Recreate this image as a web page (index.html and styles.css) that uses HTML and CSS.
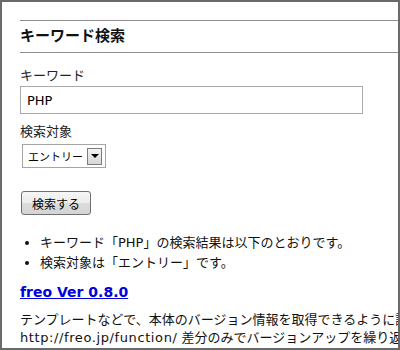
FILE: index.html
```html
<!DOCTYPE html>
<html lang="ja">
<head>
<meta charset="utf-8">
<title>キーワード検索</title>
<link rel="stylesheet" href="styles.css">
</head>
<body>
<div class="frame">
  <div class="content">
    <h2 class="title">キーワード検索</h2>
    <form class="search">
      <label class="label" for="word">キーワード</label>
      <input class="textbox" id="word" type="text" value="PHP">
      <label class="label label-target" for="target">検索対象</label>
      <div class="selectbox">
        <select class="select" id="target"><option>エントリー</option></select>
        <span class="arrow"><span class="tri"></span></span>
      </div>
      <button class="btn" type="button">検索する</button>
    </form>
    <ul class="result">
      <li>キーワード「PHP」の検索結果は以下のとおりです。</li>
      <li>検索対象は「エントリー」です。</li>
    </ul>
    <h3 class="entry"><a href="#">freo Ver 0.8.0</a></h3>
    <p class="text">テンプレートなどで、本体のバージョン情報を取得できるように調整しました。<br><span class="url">http://freo.jp/function/</span> 差分のみでバージョンアップを繰り返しています。</p>
  </div>
</div>
</body>
</html>
```
FILE: styles.css
```css
html, body {
  margin: 0;
  padding: 0;
  background: #fff;
}
body {
  font-family: "DejaVu Sans", "Noto Sans CJK JP", sans-serif;
  font-size: 13px;
  color: #111;
}
.frame {
  width: 400px;
  height: 350px;
  box-sizing: border-box;
  border: 2px solid #6a6a6a;
  overflow: hidden;
}
.content {
  padding: 18px 0 0 18px;
}
.title {
  margin: 0;
  padding: 7px 0;
  border-top: 1px solid #8e8e8e;
  border-bottom: 1px solid #8e8e8e;
  font-size: 15px;
  line-height: 17px;
  font-weight: bold;
  color: #111;
}
.search {
  display: flex;
  flex-direction: column;
  align-items: flex-start;
  margin: 0;
}
.label {
  display: block;
  margin-top: 14px;
  line-height: 18px;
  color: #222;
}
.label-target {
  margin-top: 9px;
}
.textbox {
  margin: 1px 0 0 0;
  width: 343px;
  height: 28px;
  box-sizing: border-box;
  border: 1px solid #a9a9b0;
  padding: 0 6px;
  font-family: "DejaVu Sans", "Noto Sans CJK JP", sans-serif;
  font-size: 13px;
  color: #000;
  outline: none;
}
.selectbox {
  display: flex;
  align-items: center;
  margin: 3px 0 0 2px;
  width: 84px;
  height: 24px;
  box-sizing: border-box;
  border: 1px solid #a5a5a5;
  padding: 0 3px 0 5px;
  background: #fff;
}
.select {
  appearance: none;
  -webkit-appearance: none;
  border: none;
  background: transparent;
  padding: 0;
  margin: 0;
  flex: 1;
  min-width: 0;
  font-family: "Noto Sans CJK JP", sans-serif;
  font-size: 11px;
  color: #000;
  outline: none;
}
.arrow {
  display: flex;
  align-items: center;
  justify-content: center;
  width: 15px;
  height: 17px;
  box-sizing: border-box;
  border: 1px solid #7c7c7c;
  background: linear-gradient(#f4f4f4, #d6d6d6);
}
.tri {
  width: 0;
  height: 0;
  border-left: 4px solid transparent;
  border-right: 4px solid transparent;
  border-top: 4px solid #000;
}
.btn {
  margin: 23px 0 0 1px;
  width: 70px;
  height: 24px;
  box-sizing: border-box;
  border: 1px solid #707070;
  border-radius: 3px;
  background: linear-gradient(#f6f6f6 0%, #ececec 50%, #dcdcdc 51%, #d4d4d4 100%);
  font-family: "Noto Sans CJK JP", sans-serif;
  font-size: 12px;
  color: #000;
  padding: 0;
}
.result {
  margin: 18px 0 0 0;
  padding: 0 0 0 20px;
  line-height: 20px;
  white-space: nowrap;
}
.entry {
  margin: 9px 0 0 0;
  font-size: 14px;
  line-height: 20px;
  font-weight: bold;
}
.entry a {
  color: #0000dd;
  text-decoration: underline;
}
.text {
  margin: 9px 0 0 0;
  line-height: 18px;
  white-space: nowrap;
  color: #111;
}
.url {
  letter-spacing: 0.6px;
}
```
